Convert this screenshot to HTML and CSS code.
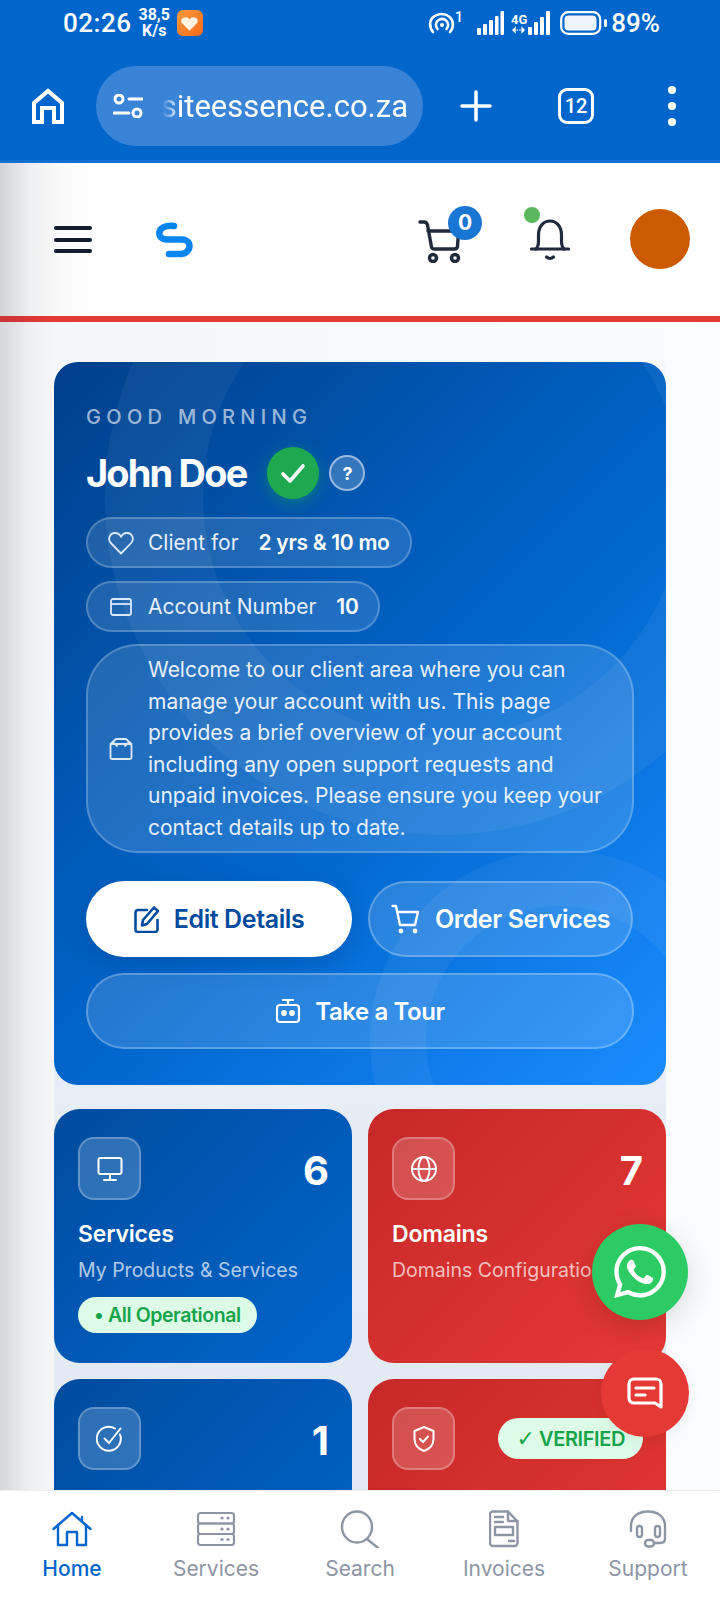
FILE: index.html
```html
<!DOCTYPE html>
<html lang="en">
<head>
  <meta charset="UTF-8" />
  <title>Client Area</title>
  <link rel="stylesheet" href="styles.css">
</head>
<body>

<!-- phone status bar -->
<div class="status">
  <span class="clock">02:26</span>
  <span class="speed">38,5<br>K/s</span>
  <span class="app-badge">
    <svg viewBox="0 0 24 24" width="19" height="19"><path fill="#fff3e6" d="M12 21 3 12c-3-3-1-8 4-8 2 0 4 1 5 3 1-2 3-3 5-3 5 0 7 5 4 8z"/></svg>
  </span>
  <span class="status-right">
    <svg class="st-hotspot" viewBox="0 0 28 22" width="28" height="22" fill="none" stroke="#fff" stroke-width="2.6" stroke-linecap="round"><path d="M5 20C1 15 1 8 6 4.5c5-3.5 11-3 15 0 5 4 5 11 1 15.5"/><path d="M9.5 17c-2.5-3-2-7 1-9 2.5-1.500 5-1.500 7 0 3 2 3.5 6 1 9"/><circle cx="14" cy="13" r="2" fill="#fff" stroke="none"/></svg>
    <sup class="st-one">1</sup>
    <svg class="st-signal" viewBox="0 0 27 24" width="27" height="24" fill="#fff"><rect x="0" y="17" width="4" height="7" rx="1"/><rect x="6" y="13" width="4" height="11" rx="1"/><rect x="12" y="9" width="4" height="15" rx="1"/><rect x="18" y="5" width="3.5" height="19" rx="1"/><rect x="23.5" y="0" width="3.5" height="24" rx="1"/></svg>
    <span class="st-4g">
      <span class="st-4g-text">4G</span>
      <svg viewBox="0 0 16 8" width="15" height="8" fill="#fff"><path d="M4 0v8L0 4zM10 8V0l4 4zM5 3h1v2H5zM8 3h1v2H8z"/></svg>
    </span>
    <svg class="st-signal2" viewBox="0 0 22 24" width="22" height="24" fill="#fff"><rect x="0" y="16" width="4" height="8" rx="1"/><rect x="6" y="11" width="4" height="13" rx="1"/><rect x="12" y="6" width="4" height="18" rx="1"/><rect x="18" y="0" width="4" height="24" rx="1"/></svg>
    <svg class="st-battery" viewBox="0 0 48 24" width="48" height="24"><rect x="1.2" y="1.2" width="39" height="21.6" rx="7" fill="none" stroke="#fff" stroke-width="2.2"/><rect x="4.5" y="4.5" width="32" height="15" rx="4" fill="#eef4fb"/><rect x="44" y="8" width="3" height="8" rx="1.5" fill="#fff"/></svg>
    <span class="st-pct">89%</span>
  </span>
</div>

<!-- browser toolbar -->
<div class="browser">
  <svg class="br-home" viewBox="0 0 32 36" width="32" height="36" fill="none" stroke="#fff" stroke-width="4"><path d="M2 34V15L16 3l14 12v19h-8V20H10v14z"/></svg>
  <div class="url-pill">
    <svg viewBox="0 0 30 24" width="30" height="24" fill="none" stroke="#fff" stroke-width="3" stroke-linecap="round"><circle cx="6" cy="5" r="4"/><path d="M16 5h13M1 19h15"/><circle cx="24" cy="19" r="4"/></svg>
    <div class="url-text"><span>siteessence.co.za</span></div>
  </div>
  <svg class="br-plus" viewBox="0 0 32 32" width="32" height="32" stroke="#fff" stroke-width="3.5" stroke-linecap="round"><path d="M16 2v28M2 16h28"/></svg>
  <span class="br-tabs">12</span>
  <span class="br-dots"><i></i><i></i><i></i></span>
</div>

<!-- site header -->
<header class="site-head">
  <div class="burger"><i></i><i></i><i></i></div>
  <svg class="logo" viewBox="0 0 37 36" width="37" height="36" fill="none" stroke="#0a84ee" stroke-width="6.5" stroke-linecap="round" stroke-linejoin="round"><path d="M18 4C9 3 3.300 6.500 3.300 11c0 4 3 6.500 7.700 6.500h15c3.500 0 7.500 2 7.500 6.500s-4 8-8.500 8H13"/></svg>
  <div class="cart">
    <svg viewBox="0 0 44 44" width="44" height="44" fill="none" stroke="#1f2a3d" stroke-width="3.4" stroke-linecap="round" stroke-linejoin="round"><path d="M2 3h4c2 0 3 1 3.500 3l4 22c.3 1.500 1.500 2 3 2h20c2 0 3-1 3-3l1-13"/><path d="M10 12h26"/><circle cx="15" cy="39" r="3.5"/><circle cx="37" cy="39" r="3.5"/></svg>
    <span class="cart-count">0</span>
  </div>
  <div class="bell">
    <svg viewBox="0 0 40 42" width="40" height="42" fill="none" stroke="#1f2a3d" stroke-width="3.2" stroke-linecap="round"><path d="M1.5 30h37"/><path d="M6 30c2-2 2.5-4 2.5-8v-6C8.500 8 13 2 20 2s11.500 6 11.500 14v6c0 4 .5 6 2.500 8"/><path d="M16.500 38c2 1.800 5 1.800 7 0"/></svg>
    <span class="bell-dot"></span>
  </div>
  <div class="avatar"></div>
</header>
<div class="red-line"></div>

<main class="main">
  <div class="column">

    <section class="hero">
      <div class="greet">GOOD MORNING</div>
      <div class="name-row">
        <h1 class="name">John Doe</h1>
        <span class="verified-tick">
          <svg viewBox="0 0 30 30" width="30" height="30" fill="none" stroke="#fff" stroke-width="3.6" stroke-linecap="round" stroke-linejoin="round"><path d="M5 16l7 7L25 8"/></svg>
        </span>
        <span class="help-tick">?</span>
      </div>

      <div class="info-pill">
        <svg viewBox="0 0 26 24" width="26" height="24" fill="none" stroke="#dce9fb" stroke-width="1.8" stroke-linejoin="round"><path d="M13 22.5 2.800 12C-.5 8.500 1.500 2 7 2c2.800 0 4.800 1.500 6 3.800C14.200 3.500 16.200 2 19 2c5.500 0 7.500 6.500 4.200 10z"/></svg>
        <span class="info-label">Client for</span>
        <b class="info-value">2 yrs &amp; 10 mo</b>
      </div>
      <div class="info-pill">
        <svg viewBox="0 0 26 24" width="26" height="24" fill="none" stroke="#dce9fb" stroke-width="1.8"><rect x="3" y="4" width="20" height="16" rx="2"/><path d="M3 9h20"/></svg>
        <span class="info-label">Account Number</span>
        <b class="info-value">10</b>
      </div>
      <div class="welcome">
        <svg viewBox="0 0 26 24" width="26" height="24" fill="none" stroke="#dce9fb" stroke-width="1.8" stroke-linejoin="round" stroke-linecap="round"><rect x="2.5" y="7" width="21" height="15" rx="1.5"/><path d="M2.500 7 8 2h10l5.500 5M6 6l3 3M20 6l-3 3"/></svg>
        <p>Welcome to our client area where you can manage your account with us. This page provides a brief overview of your account including any open support requests and unpaid invoices. Please ensure you keep your contact details up to date.</p>
      </div>

      <div class="btn-row">
        <a class="btn btn-white">
          <svg viewBox="0 0 26 28" width="26" height="28" fill="none" stroke="#004b9e" stroke-width="2.6" stroke-linecap="round" stroke-linejoin="round"><path d="M13 5H4a2.500 2.500 0 0 0-2.500 2.500v17A2.500 2.500 0 0 0 4 27h17a2.500 2.500 0 0 0 2.500-2.500V15"/><path d="M20 2.500l4 3.500L13 19l-5 1.500L9 15z"/></svg>
          Edit Details
        </a>
        <a class="btn btn-glass">
          <svg viewBox="0 0 30 30" width="30" height="30" fill="none" stroke="#fff" stroke-width="2.4" stroke-linecap="round" stroke-linejoin="round"><path d="M1.500 2h3.500l4 19h15l3-13H7"/><circle cx="10" cy="27" r="1.2" fill="#fff"/><circle cx="24" cy="27" r="1.2" fill="#fff"/></svg>
          Order Services
        </a>
      </div>
      <a class="btn btn-glass btn-tour">
        <svg viewBox="0 0 26 26" width="26" height="26" fill="none" stroke="#fff" stroke-width="2.2" stroke-linecap="round"><rect x="2" y="7" width="22" height="17" rx="3"/><path d="M13 2v5M8 2h10"/><circle cx="9" cy="15" r="1.8" fill="#fff"/><circle cx="17" cy="15" r="1.8" fill="#fff"/></svg>
        Take a Tour
      </a>
    </section>

    <section class="stats">
      <div class="stat stat-blue">
        <div class="stat-top">
          <span class="stat-icon">
            <svg viewBox="0 0 28 28" width="28" height="28" fill="none" stroke="#fff" stroke-width="2" stroke-linecap="round"><rect x="2.5" y="3" width="23" height="16" rx="2"/><path d="M14 19v5M8 25h12"/></svg>
          </span>
          <span class="stat-num">6</span>
        </div>
        <div class="stat-title">Services</div>
        <div class="stat-sub">My Products &amp; Services</div>
        <span class="tag">• All Operational</span>
      </div>

      <div class="stat stat-red">
        <div class="stat-top">
          <span class="stat-icon">
            <svg viewBox="0 0 28 28" width="28" height="28" fill="none" stroke="#fff" stroke-width="1.9"><circle cx="14" cy="14" r="12"/><ellipse cx="14" cy="14" rx="5.5" ry="12"/><path d="M2 14h24"/></svg>
          </span>
          <span class="stat-num">7</span>
        </div>
        <div class="stat-title">Domains</div>
        <div class="stat-sub">Domains Configuration</div>
      </div>

      <div class="stat stat-blue">
        <div class="stat-top">
          <span class="stat-icon">
            <svg viewBox="0 0 28 28" width="28" height="28" fill="none" stroke="#fff" stroke-width="2" stroke-linecap="round" stroke-linejoin="round"><path d="M24 9.500A12 12 0 1 1 19 3.500"/><path d="M8.500 13.500l4.500 4.500L24.500 3.500"/></svg>
          </span>
          <span class="stat-num">1</span>
        </div>
      </div>

      <div class="stat stat-red">
        <div class="stat-top">
          <span class="stat-icon">
            <svg viewBox="0 0 28 28" width="28" height="28" fill="none" stroke="#fff" stroke-width="2" stroke-linecap="round" stroke-linejoin="round"><path d="M14 2l9.500 4v8c0 6-4 10-9.500 12C8.500 24 4.500 20 4.500 14V6z"/><path d="M10 14l3 3 5-5.500"/></svg>
          </span>
          <span class="tag tag-verified"><span class="tick-mark">✓</span> VERIFIED</span>
        </div>
      </div>
    </section>

  </div>
</main>

<!-- floating buttons -->
<a class="fab fab-whatsapp">
  <svg viewBox="0 0 24 24" width="52" height="52" fill="#fff"><path d="M17.472 14.382c-.297-.149-1.758-.867-2.03-.967-.273-.099-.471-.148-.67.15-.197.297-.767.966-.94 1.164-.173.199-.347.223-.644.075-.297-.15-1.255-.463-2.39-1.475-.883-.788-1.48-1.761-1.653-2.059-.173-.297-.018-.458.13-.606.134-.133.298-.347.446-.52.149-.174.198-.298.298-.497.099-.198.05-.371-.025-.52-.075-.149-.669-1.612-.916-2.207-.242-.579-.487-.5-.669-.51-.173-.008-.371-.01-.57-.01-.198 0-.52.074-.792.372-.272.297-1.04 1.016-1.04 2.479 0 1.462 1.065 2.875 1.213 3.074.149.198 2.096 3.2 5.077 4.487.709.306 1.262.489 1.694.625.712.227 1.36.195 1.871.118.571-.085 1.758-.719 2.006-1.413.248-.694.248-1.289.173-1.413-.074-.124-.272-.198-.57-.347m-5.421 7.403h-.004a9.87 9.87 0 01-5.031-1.378l-.361-.214-3.741.982.998-3.648-.235-.374a9.86 9.86 0 01-1.51-5.26c.001-5.45 4.436-9.884 9.888-9.884 2.64 0 5.122 1.03 6.988 2.898a9.825 9.825 0 012.893 6.994c-.003 5.45-4.437 9.884-9.885 9.884m8.413-18.297A11.815 11.815 0 0012.05 0C5.495 0 .16 5.335.157 11.892c0 2.096.547 4.142 1.588 5.945L.057 24l6.305-1.654a11.882 11.882 0 005.683 1.448h.005c6.554 0 11.89-5.335 11.893-11.893a11.821 11.821 0 00-3.48-8.413z"/></svg>
</a>
<a class="fab fab-chat">
  <svg viewBox="0 0 36 32" width="36" height="32" fill="none" stroke="#fff" stroke-width="3.2" stroke-linecap="round" stroke-linejoin="round"><path d="M7 2h22a5 5 0 0 1 5 5v23l-6-4H7a5 5 0 0 1-5-5V7a5 5 0 0 1 5-5z"/><path d="M9 11h18M9 18h9"/></svg>
</a>

<!-- bottom nav -->
<nav class="tabbar">
  <a class="tab tab-active">
    <svg viewBox="0 0 40 36" width="40" height="36" fill="none" stroke="#0066cc" stroke-width="2.4" stroke-linecap="round" stroke-linejoin="round"><path d="M1.500 18 20 2l18.500 16"/><path d="M6 14v20h9V21h10v13h9V14"/><path d="M30 6v3"/></svg>
    <span>Home</span>
  </a>
  <a class="tab">
    <svg viewBox="0 0 40 36" width="40" height="36" fill="none" stroke="#8d95a5" stroke-width="2.2"><rect x="2" y="2" width="36" height="10.5" rx="2.5"/><rect x="2" y="12.5" width="36" height="10.5" rx="2.5"/><rect x="2" y="23" width="36" height="11" rx="2.5"/><g fill="#8d95a5" stroke="none"><circle cx="26" cy="7" r="1.6"/><circle cx="32" cy="7" r="1.6"/><circle cx="26" cy="18" r="1.6"/><circle cx="32" cy="18" r="1.6"/><circle cx="26" cy="28.5" r="1.6"/><circle cx="32" cy="28.5" r="1.6"/></g></svg>
    <span>Services</span>
  </a>
  <a class="tab">
    <svg viewBox="0 0 40 38" width="40" height="38" fill="none" stroke="#8d95a5" stroke-width="2.4" stroke-linecap="round"><ellipse cx="17" cy="17" rx="15" ry="15.5"/><path d="M27 29l11 9"/></svg>
    <span>Search</span>
  </a>
  <a class="tab">
    <svg viewBox="0 0 30 38" width="30" height="38" fill="none" stroke="#8d95a5" stroke-width="2.4" stroke-linejoin="round" stroke-linecap="round"><path d="M4 1.500h15l9.500 10V33a3 3 0 0 1-3 3H4a3 3 0 0 1-3-3V4.500a3 3 0 0 1 3-3z"/><path d="M19 1.500V11h9.500M6 7h8M6 12h8M20 31h5"/><rect x="6" y="17" width="18" height="8"/></svg>
    <span>Invoices</span>
  </a>
  <a class="tab">
    <svg viewBox="0 0 40 38" width="40" height="38" fill="none" stroke="#8d95a5" stroke-width="2.4" stroke-linecap="round" stroke-linejoin="round"><path d="M3 21v-5C3 7 10 1.500 20 1.500S37 7 37 16v13c0 2.500-2 4-5 4h-6"/><rect x="9" y="16" width="5" height="11" rx="2.5"/><rect x="27" y="16" width="5" height="11" rx="2.5"/><rect x="17" y="30" width="9" height="6.5" rx="3.2"/></svg>
    <span>Support</span>
  </a>
</nav>

</body>
</html>
```

FILE: styles.css
```css
html, body {
  margin: 0;
  padding: 0;
  height: 1600px;
  overflow: hidden;
}
body {
  font-family: "Inter", "Liberation Sans", sans-serif;
  background: #fff;
  color: #fff;
}
a {
  text-decoration: none;
}

/* status bar */
.status {
  height: 46px;
  background: #0066cc;
  display: flex;
  align-items: center;
  padding: 0 60px 0 63px;
  font-family: "Roboto", sans-serif;
}
.clock {
  font-size: 26px;
  font-weight: 500;
  letter-spacing: 0.5px;
}
.speed {
  font-size: 16px;
  font-weight: 700;
  line-height: 16px;
  text-align: center;
  margin-left: 7px;
}
.app-badge {
  width: 26px;
  height: 26px;
  margin-left: 7px;
  border-radius: 6px;
  background: linear-gradient(135deg, #ff9a3c, #f26a1b);
  display: flex;
  align-items: center;
  justify-content: center;
}
.status-right {
  margin-left: auto;
  display: flex;
  align-items: center;
}
.st-one {
  font-size: 14px;
  font-weight: 500;
  line-height: 1;
  margin: -12px 0 0 -1px;
  vertical-align: baseline;
}
.st-signal {
  margin-left: 14px;
}
.st-4g {
  display: flex;
  flex-direction: column;
  align-items: center;
  margin-left: 7px;
}
.st-4g-text {
  font-size: 13px;
  font-weight: 700;
  line-height: 13px;
}
.st-signal2 {
  margin-left: 1px;
}
.st-battery {
  margin-left: 10px;
}
.st-pct {
  font-size: 26px;
  font-weight: 500;
  margin-left: 3px;
}

/* browser toolbar */
.browser {
  background: #0066cc;
  border-bottom: 3px solid #0f6fd2;
  padding: 20px 0 14px 32px;
  display: flex;
  align-items: center;
}
.url-pill {
  width: 327px;
  height: 80px;
  margin-left: 32px;
  border-radius: 40px;
  background: #3a84d8;
  display: flex;
  align-items: center;
  padding-left: 17px;
  box-sizing: border-box;
}
.url-text {
  width: 248px;
  margin-left: 17px;
  overflow: hidden;
  display: flex;
  justify-content: flex-end;
  white-space: nowrap;
  font-family: "Roboto", sans-serif;
  font-size: 31px;
  -webkit-mask-image: linear-gradient(90deg, transparent 2px, #000 20px);
  mask-image: linear-gradient(90deg, transparent 2px, #000 20px);
}
.br-plus {
  margin-left: 37px;
}
.br-tabs {
  width: 36px;
  height: 36px;
  margin-left: 66px;
  border: 3.5px solid #fff;
  border-radius: 9px;
  box-sizing: border-box;
  font-family: "Roboto", sans-serif;
  font-size: 20px;
  font-weight: 500;
  display: flex;
  align-items: center;
  justify-content: center;
}
.br-dots {
  margin-left: 74px;
  display: flex;
  flex-direction: column;
  gap: 8px;
}
.br-dots i {
  width: 8px;
  height: 8px;
  border-radius: 50%;
  background: #fff;
}

/* site header */
.site-head {
  height: 153px;
  background: linear-gradient(90deg, #d2d3d5 0, #eeeff0 30px, #fafafa 60px, #fff 100px);
  display: flex;
  align-items: center;
  padding: 0 30px 0 54px;
}
.burger {
  width: 38px;
  display: flex;
  flex-direction: column;
  gap: 7.5px;
}
.burger i {
  height: 4px;
  border-radius: 2px;
  background: #111c30;
}
.logo {
  margin-left: 64px;
}
.cart {
  position: relative;
  margin-left: auto;
  width: 44px;
  height: 44px;
  margin-top: 2px;
}
.cart-count {
  position: absolute;
  left: 30px;
  top: -13px;
  width: 34px;
  height: 34px;
  border-radius: 50%;
  background: #1976d2;
  font-size: 21px;
  font-weight: 700;
  display: flex;
  align-items: center;
  justify-content: center;
}
.bell {
  position: relative;
  width: 40px;
  height: 42px;
  margin-left: 68px;
}
.bell-dot {
  position: absolute;
  left: -6px;
  top: -12px;
  width: 16px;
  height: 16px;
  border-radius: 50%;
  background: #5cb85c;
}
.avatar {
  width: 60px;
  height: 60px;
  margin-left: 60px;
  margin-top: -2px;
  border-radius: 50%;
  background: #cc5a00;
}
.red-line {
  height: 6px;
  background: linear-gradient(90deg, #c93333 0, #e53935 50px);
}

/* main */
.main {
  background: linear-gradient(90deg, #d6d7d9 0, #eeeff0 30px, #f5f6f8 54px, #fbfcfe 100%);
  padding: 40px 54px 0;
  height: 1278px;
  box-sizing: border-box;
}
.column {
  background: linear-gradient(180deg, #f6f8fb, #dde6f0);
}

.hero {
  position: relative;
  overflow: hidden;
  height: 723px;
  box-sizing: border-box;
  padding: 43px 32px 0;
  border-radius: 24px;
  background: linear-gradient(135deg, #003f8a 0%, #0066cc 55%, #1a8cff 100%);
}
.hero::before {
  content: "";
  position: absolute;
  left: 51px;
  top: -203px;
  width: 676px;
  height: 676px;
  box-sizing: border-box;
  border: 98px solid rgba(255, 255, 255, 0.05);
  border-radius: 50%;
}
.hero::after {
  content: "";
  position: absolute;
  left: 316px;
  top: 488px;
  width: 380px;
  height: 380px;
  box-sizing: border-box;
  border: 56px solid rgba(255, 255, 255, 0.05);
  border-radius: 50%;
}
.hero > * {
  position: relative;
  z-index: 1;
}
.greet {
  font-size: 20px;
  font-weight: 500;
  letter-spacing: 5.3px;
  line-height: 24px;
  color: rgba(255, 255, 255, 0.62);
}
.name-row {
  display: flex;
  align-items: center;
  margin-top: 18px;
  height: 52px;
}
.name {
  margin: 0;
  font-size: 38px;
  font-weight: 700;
  letter-spacing: -1.85px;
  line-height: 52px;
}
.verified-tick {
  width: 52px;
  height: 52px;
  margin-left: 21px;
  border-radius: 50%;
  background: #1ea84f;
  box-shadow: 0 4px 16px rgba(30, 168, 79, 0.45);
  display: flex;
  align-items: center;
  justify-content: center;
}
.help-tick {
  width: 36px;
  height: 36px;
  margin-left: 10px;
  box-sizing: border-box;
  border: 2.5px solid rgba(255, 255, 255, 0.5);
  border-radius: 50%;
  background: rgba(255, 255, 255, 0.2);
  font-size: 18px;
  font-weight: 700;
  display: flex;
  align-items: center;
  justify-content: center;
}
.info-pill {
  display: inline-flex;
  align-items: center;
  height: 51px;
  box-sizing: border-box;
  padding: 0 20px;
  margin-top: 18px;
  border: 2px solid rgba(255, 255, 255, 0.22);
  border-radius: 26px;
  background: rgba(255, 255, 255, 0.12);
  font-size: 21px;
  vertical-align: top;
}
.info-pill + .info-pill {
  margin-top: 13px;
}
.info-label {
  margin-left: 14px;
  color: #e6effa;
}
.info-value {
  margin-left: 20px;
  font-weight: 600;
  letter-spacing: -0.3px;
}
.welcome {
  display: flex;
  align-items: center;
  margin-top: 12px;
  height: 209px;
  box-sizing: border-box;
  padding: 0 24px 0 20px;
  border: 2px solid rgba(255, 255, 255, 0.22);
  border-radius: 52px;
  background: rgba(255, 255, 255, 0.13);
}
.welcome svg {
  flex: none;
}
.welcome p {
  margin: 0 0 0 14px;
  font-size: 21px;
  line-height: 31.5px;
  color: #e6effa;
}
.btn-row {
  display: grid;
  grid-template-columns: 266px 265px;
  gap: 16px;
  margin-top: 28px;
}
.btn {
  display: flex;
  align-items: center;
  justify-content: center;
  gap: 14px;
  height: 76px;
  box-sizing: border-box;
  border-radius: 38px;
  font-size: 25px;
  font-weight: 600;
  letter-spacing: -0.4px;
}
.btn-white {
  background: #fff;
  color: #004b9e;
  box-shadow: 0 8px 24px rgba(0, 40, 100, 0.22);
}
.btn-glass {
  color: #fff;
  border: 2px solid rgba(255, 255, 255, 0.25);
  background: rgba(255, 255, 255, 0.14);
}
.btn-tour {
  margin-top: 16px;
  font-size: 24px;
}

/* stat cards */
.stats {
  display: grid;
  grid-template-columns: 298px 298px;
  gap: 16px;
  margin-top: 24px;
}
.stat {
  height: 254px;
  box-sizing: border-box;
  padding: 28px 23px 0 24px;
  border-radius: 26px;
}
.stat-blue {
  background: linear-gradient(135deg, #004c9f, #0066cc);
}
.stat-red {
  background: linear-gradient(135deg, #c62828, #e53935);
}
.stat-top {
  display: flex;
  align-items: center;
  justify-content: space-between;
}
.stat-icon {
  width: 63px;
  height: 63px;
  box-sizing: border-box;
  border: 2px solid rgba(255, 255, 255, 0.25);
  border-radius: 16px;
  background: rgba(255, 255, 255, 0.18);
  display: flex;
  align-items: center;
  justify-content: center;
}
.stat-num {
  font-size: 40px;
  font-weight: 700;
  line-height: 1;
  margin-top: 4px;
}
.stat-title {
  margin-top: 19px;
  font-size: 23px;
  font-weight: 600;
  line-height: 30px;
  letter-spacing: -0.2px;
}
.stat-sub {
  margin-top: 8px;
  font-size: 19.5px;
  line-height: 26px;
  color: rgba(255, 255, 255, 0.7);
  white-space: nowrap;
}
.tag {
  display: inline-block;
  margin-top: 14px;
  padding: 0 16px;
  height: 36px;
  line-height: 36px;
  border-radius: 18px;
  background: #dcfce7;
  color: #16a34a;
  font-size: 19.5px;
  font-weight: 600;
  letter-spacing: -0.4px;
}
.tag-verified {
  margin: 0;
  height: 41px;
  line-height: 41px;
  border-radius: 21px;
  padding: 0 18px;
  font-size: 20px;
}
.tick-mark {
  font-family: "DejaVu Sans", sans-serif;
  font-size: 22px;
  font-weight: 700;
}

/* floating buttons */
.fab {
  position: fixed;
  border-radius: 50%;
  display: flex;
  align-items: center;
  justify-content: center;
}
.fab-whatsapp {
  left: 592px;
  top: 1224px;
  width: 96px;
  height: 96px;
  background: #2ccb64;
  box-shadow: 0 8px 28px rgba(0, 0, 0, 0.14);
}
.fab-chat {
  left: 601px;
  top: 1349px;
  width: 88px;
  height: 88px;
  background: #e53935;
  box-shadow: 0 4px 14px rgba(0, 0, 0, 0.06);
}

/* bottom nav */
.tabbar {
  position: fixed;
  left: 0;
  right: 0;
  bottom: 0;
  height: 110px;
  background: #fff;
  border-top: 1px solid #eceef1;
  box-sizing: border-box;
  display: grid;
  grid-template-columns: repeat(5, 1fr);
}
.tab {
  display: flex;
  flex-direction: column;
  align-items: center;
  justify-content: flex-start;
  padding-top: 19px;
  color: #8d95a5;
  font-size: 21px;
  line-height: 28px;
}
.tab svg {
  height: 38px;
  margin-bottom: 7px;
}
.tab-active {
  color: #0066cc;
  font-weight: 500;
}
```
